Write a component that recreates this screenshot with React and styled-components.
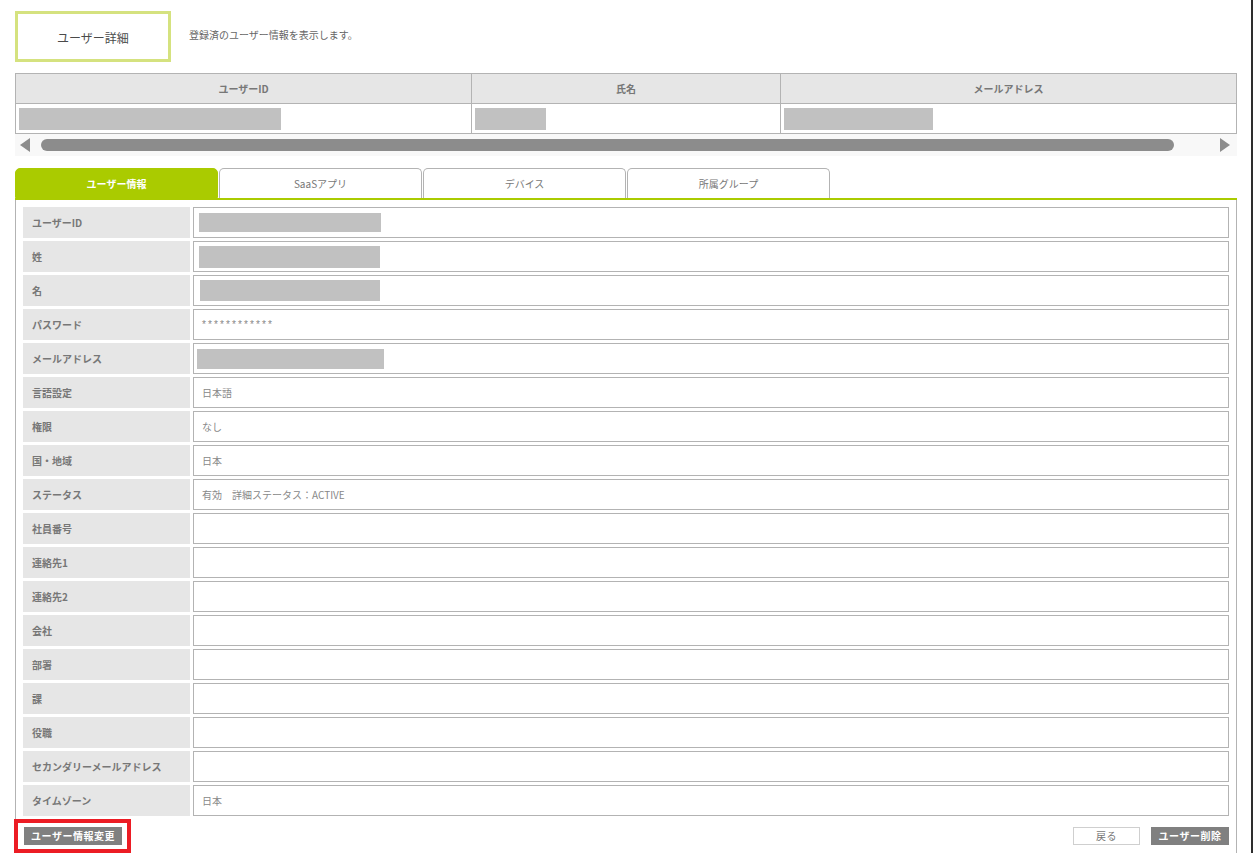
import styled, { createGlobalStyle } from "styled-components";

const GlobalStyle = createGlobalStyle`
    html, body {
        margin: 0;
        padding: 0;
        background: #fff;
    }
    body {
        font-family: "Noto Sans CJK JP", "Noto Sans", sans-serif;
        color: #777;
        font-size: 10px;
    }
`;

const GREEN = "#aacb00";
const LINE = "#b3b3b3";
const CELL = "#e6e6e6";
const BLOCK = "#c1c1c1";

const topColumns = [
    { label: "ユーザーID", width: "37.35%", block: 262 },
    { label: "氏名", width: "25.3%", block: 71 },
    { label: "メールアドレス", width: "auto", block: 149 },
];

const tabs = ["ユーザー情報", "SaaSアプリ", "デバイス", "所属グループ"];

// block: masked value {w, h, x}, text: plain value
const fields = [
    { label: "ユーザーID", block: { w: 182, h: 19, x: 4 } },
    { label: "姓", block: { w: 181, h: 22, x: 4 } },
    { label: "名", block: { w: 180, h: 21, x: 5 } },
    { label: "パスワード", text: "************", mono: true },
    { label: "メールアドレス", block: { w: 187, h: 20, x: 2 } },
    { label: "言語設定", text: "日本語" },
    { label: "権限", text: "なし" },
    { label: "国・地域", text: "日本" },
    { label: "ステータス", text: "有効　詳細ステータス：ACTIVE" },
    { label: "社員番号" },
    { label: "連絡先1" },
    { label: "連絡先2" },
    { label: "会社" },
    { label: "部署" },
    { label: "課" },
    { label: "役職" },
    { label: "セカンダリーメールアドレス" },
    { label: "タイムゾーン", text: "日本" },
];

const App = () => {
    return (
        <Page>
            <GlobalStyle />
            <Header>
                <TitleBox>ユーザー詳細</TitleBox>
                <Description>登録済のユーザー情報を表示します。</Description>
            </Header>

            <SummaryTable>
                <colgroup>
                    {topColumns.map((c) => (
                        <col key={c.label} style={{ width: c.width }} />
                    ))}
                </colgroup>
                <thead>
                    <tr>
                        {topColumns.map((c) => (
                            <SummaryHead key={c.label}>{c.label}</SummaryHead>
                        ))}
                    </tr>
                </thead>
                <tbody>
                    <tr>
                        {topColumns.map((c) => (
                            <SummaryCell key={c.label}>
                                <Masked style={{ width: c.block, height: 22 }} />
                            </SummaryCell>
                        ))}
                    </tr>
                </tbody>
            </SummaryTable>
            <ScrollTrack>
                <Arrow $dir="left" />
                <Thumb />
                <Arrow $dir="right" />
            </ScrollTrack>

            <TabBar>
                {tabs.map((t, i) => (
                    <Tab key={t} $active={i === 0}>
                        {t}
                    </Tab>
                ))}
            </TabBar>

            <Panel>
                <FieldList>
                    {fields.map((f) => (
                        <FieldRow key={f.label}>
                            <FieldLabel>{f.label}</FieldLabel>
                            <FieldValue $mono={f.mono}>
                                {f.block ? (
                                    <Masked
                                        style={{
                                            width: f.block.w,
                                            height: f.block.h,
                                            marginLeft: f.block.x - 7,
                                        }}
                                    />
                                ) : (
                                    f.text
                                )}
                            </FieldValue>
                        </FieldRow>
                    ))}
                </FieldList>

                <Footer>
                    <Highlight>
                        <Button $variant="dark" $width={98}>
                            ユーザー情報変更
                        </Button>
                    </Highlight>
                    <RightButtons>
                        <Button $variant="light" $width={67}>
                            戻る
                        </Button>
                        <Button $variant="dark" $width={78}>
                            ユーザー削除
                        </Button>
                    </RightButtons>
                </Footer>
            </Panel>
        </Page>
    );
};

const Page = styled.div`
    box-sizing: border-box;
    width: 1253px;
    height: 853px;
    padding: 11px 14px 0 15px;
    border-right: 2px solid #2e2e2e;
    overflow: hidden;
`;

const Header = styled.div`
    display: flex;
    align-items: center;
    height: 51px;
`;

const TitleBox = styled.div`
    box-sizing: border-box;
    width: 156px;
    height: 51px;
    border: 3px solid #d5e27f;
    display: flex;
    align-items: center;
    justify-content: center;
    font-size: 12px;
    color: #4a4a4a;
    padding-top: 1px;
`;

const Description = styled.div`
    margin-left: 18px;
    margin-top: -4px;
    font-size: 10px;
    color: #666;
`;

const SummaryTable = styled.table`
    margin-top: 11px;
    width: 100%;
    border-collapse: collapse;
    table-layout: fixed;
`;

const SummaryHead = styled.th`
    height: 29px;
    padding: 0;
    background: ${CELL};
    border: 1px solid ${LINE};
    font-size: 10px;
    font-weight: bold;
    color: #777;
`;

const SummaryCell = styled.td`
    height: 29px;
    padding: 0 3px;
    border: 1px solid ${LINE};
    vertical-align: middle;
`;

const Masked = styled.div`
    background: ${BLOCK};
`;

const ScrollTrack = styled.div`
    height: 22px;
    background: #f8f8f8;
    display: flex;
    align-items: center;
    padding: 0 6px 0 5px;
    gap: 11px;
`;

const Arrow = styled.div`
    width: 0;
    height: 0;
    border-top: 7px solid transparent;
    border-bottom: 7px solid transparent;
    ${({ $dir }) =>
        $dir === "left"
            ? `border-right: 10px solid #8c8c8c;`
            : `border-left: 10px solid #8c8c8c; margin-left: 35px;`}
`;

const Thumb = styled.div`
    width: 1133px;
    height: 12px;
    border-radius: 6px;
    background: #8c8c8c;
`;

const TabBar = styled.div`
    margin-top: 12px;
    display: flex;
    gap: 1px;
    border-bottom: 2px solid ${GREEN};
`;

const Tab = styled.div`
    box-sizing: border-box;
    width: 203px;
    height: 30px;
    display: flex;
    align-items: center;
    justify-content: center;
    border-radius: 5px 5px 0 0;
    font-size: 10px;
    ${({ $active }) =>
        $active
            ? `
        background: ${GREEN};
        color: #fff;
        font-weight: bold;
        border: 1px solid ${GREEN};
    `
            : `
        background: #fff;
        color: #777;
        border: 1px solid ${LINE};
        border-bottom: none;
    `}
`;

const Panel = styled.div`
    border-left: 1px solid ${LINE};
    border-right: 1px solid ${LINE};
    padding: 7px 7px 0 7px;
    min-height: 653px;
`;

const FieldList = styled.div`
    display: flex;
    flex-direction: column;
    gap: 3px;
`;

const FieldRow = styled.div`
    display: grid;
    grid-template-columns: 167px 1fr;
    gap: 3px;
    height: 31px;
`;

const FieldLabel = styled.div`
    background: ${CELL};
    display: flex;
    align-items: center;
    padding-left: 9px;
    font-size: 10px;
    font-weight: bold;
    color: #777;
`;

const FieldValue = styled.div`
    box-sizing: border-box;
    border: 1px solid ${LINE};
    display: flex;
    align-items: center;
    padding-left: 8px;
    font-size: 10px;
    color: #888;
    ${({ $mono }) =>
        $mono &&
        `font-family: "Liberation Sans", sans-serif; letter-spacing: 2.1px; font-size: 10px;`}
`;

const Footer = styled.div`
    display: flex;
    justify-content: space-between;
    align-items: flex-start;
    margin: 3px 0 0 -9px;
`;

const Highlight = styled.div`
    border: 4px solid #ec1c24;
    padding: 4px 5px 4px 6px;
`;

const RightButtons = styled.div`
    display: flex;
    gap: 11px;
    margin-top: 8px;
`;

const Button = styled.button`
    box-sizing: border-box;
    width: ${({ $width }) => $width}px;
    height: 18px;
    padding: 0;
    display: flex;
    align-items: center;
    justify-content: center;
    white-space: nowrap;
    font-family: inherit;
    font-size: 10px;
    line-height: 1;
    letter-spacing: 0.5px;
    cursor: pointer;
    ${({ $variant }) =>
        $variant === "dark"
            ? `
        background: #808080;
        color: #fff;
        font-weight: bold;
        border: none;
    `
            : `
        background: #fff;
        color: #777;
        border: 1px solid #cfcfcf;
    `}
`;

export default App;
